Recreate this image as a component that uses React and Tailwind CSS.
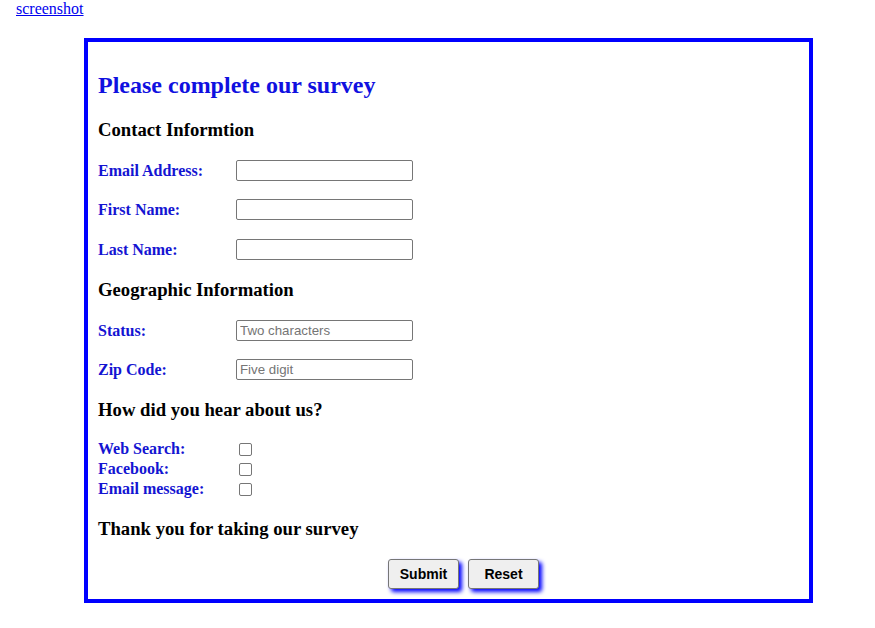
const serif = { fontFamily: '"Liberation Serif", "Times New Roman", serif' };

const TextRow = ({ label, placeholder, className }) => (
  <div className={`flex items-center h-[21px] ${className}`}>
    <label className="w-[138px] text-[16px] font-bold text-[#1414d2]">{label}</label>
    <input
      type="text"
      placeholder={placeholder}
      className="w-[177px] h-[21px] border border-[#767676] rounded-[2px] px-[3px] text-[13.3px] placeholder:text-[#757575] bg-white"
      style={{ fontFamily: '"Liberation Sans", Arial, sans-serif' }}
    />
  </div>
);

const CheckRow = ({ label }) => (
  <div className="flex items-center h-[20px]">
    <label className="w-[141px] text-[16px] font-bold text-[#1414d2]">{label}</label>
    <input type="checkbox" className="w-[13px] h-[13px] border border-[#767676] rounded-[2px] appearance-none bg-white" />
  </div>
);

export default function App() {
  return (
    <div className="bg-white min-h-[628px] text-black" style={serif}>
      <a href="#" className="block ml-[16px] text-[16px] leading-[18px] text-[#0000ee] underline w-fit">
        screenshot
      </a>
      <div className="mt-[20px] ml-[84px] w-[729px] border-4 border-[#0000ff] pl-[10px] flex flex-col">
        <h1 className="mt-[29px] text-[24px] leading-[28px] font-bold text-[#1010e0]">
          Please complete our survey
        </h1>
        <h3 className="mt-[20px] text-[18.7px] leading-[22px] font-bold">Contact Informtion</h3>
        <TextRow label="Email Address:" className="mt-[19px]" />
        <TextRow label="First Name:" className="mt-[18px]" />
        <TextRow label="Last Name:" className="mt-[19px]" />
        <h3 className="mt-[19px] text-[18.7px] leading-[22px] font-bold">Geographic Information</h3>
        <TextRow label="Status:" placeholder="Two characters" className="mt-[19px]" />
        <TextRow label="Zip Code:" placeholder="Five digit" className="mt-[18px]" />
        <h3 className="mt-[19px] text-[18.7px] leading-[22px] font-bold">How did you hear about us?</h3>
        <div className="mt-[18px] flex flex-col">
          <CheckRow label="Web Search:" />
          <CheckRow label="Facebook:" />
          <CheckRow label="Email message:" />
        </div>
        <h3 className="mt-[19px] text-[18.7px] leading-[22px] font-bold">Thank you for taking our survey</h3>
        <div className="mt-[19px] mb-[10px] ml-[290px] flex gap-[9px]">
          <button
            type="submit"
            className="w-[71px] h-[30px] bg-[#efefef] border border-[#767676] rounded-[3px] text-[14px] font-bold shadow-[3px_3px_4px_#0000ff]"
            style={{ fontFamily: '"Liberation Sans", Arial, sans-serif' }}
          >
            Submit
          </button>
          <button
            type="reset"
            className="w-[71px] h-[30px] bg-[#efefef] border border-[#767676] rounded-[3px] text-[14px] font-bold shadow-[3px_3px_4px_#0000ff]"
            style={{ fontFamily: '"Liberation Sans", Arial, sans-serif' }}
          >
            Reset
          </button>
        </div>
      </div>
    </div>
  );
}
